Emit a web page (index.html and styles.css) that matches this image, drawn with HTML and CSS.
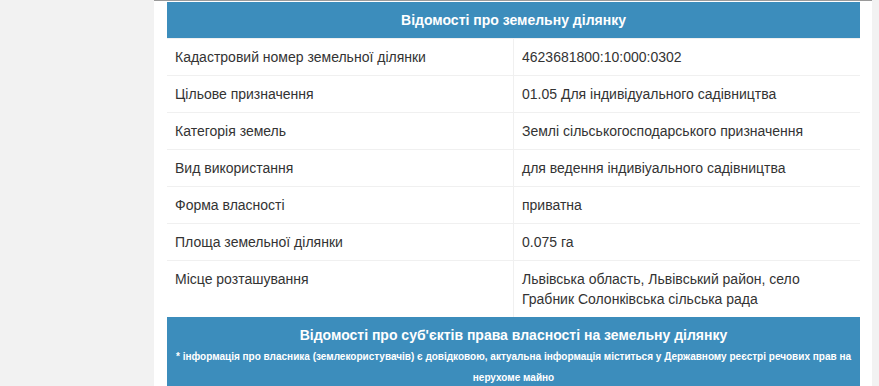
FILE: index.html
```html
<!DOCTYPE html>
<html lang="uk">
<head>
<meta charset="utf-8">
<link rel="stylesheet" href="styles.css">
</head>
<body>
<div class="page">
  <div class="panel">
    <table class="info">
      <thead>
        <tr><th colspan="2" class="head">Відомості про земельну ділянку</th></tr>
      </thead>
      <tbody>
        <tr><td class="label">Кадастровий номер земельної ділянки</td><td>4623681800:10:000:0302</td></tr>
        <tr><td class="label">Цільове призначення</td><td>01.05 Для індивідуального садівництва</td></tr>
        <tr><td class="label">Категорія земель</td><td>Землі сільськогосподарського призначення</td></tr>
        <tr><td class="label">Вид використання</td><td>для ведення індивіуального садівництва</td></tr>
        <tr><td class="label">Форма власності</td><td>приватна</td></tr>
        <tr><td class="label">Площа земельної ділянки</td><td>0.075 га</td></tr>
        <tr><td class="label">Місце розташування</td><td>Львівська область, Львівський район, село Грабник Солонківська сільська рада</td></tr>
        <tr><th colspan="2" class="head head2">Відомості про суб'єктів права власності на земельну ділянку<div class="note">* інформація про власника (землекористувачів) є довідковою, актуальна інформація міститься у Державному реєстрі речових прав на нерухоме майно</div></th></tr>
      </tbody>
    </table>
  </div>
</div>
</body>
</html>
```
FILE: styles.css
```css
html, body {
  margin: 0;
  padding: 0;
  background: #f2f2f2;
  font-family: "Liberation Sans", Arial, sans-serif;
  color: #333;
  font-size: 14px;
}
.page {
  display: flex;
  padding-left: 154px;
  height: 386px;
  overflow: hidden;
}
.panel {
  width: 718px;
  background: #fff;
  border-top: 1px solid #9a9a9a;
  padding: 1px 12px 0 13px;
  box-sizing: border-box;
}
.info {
  width: 693px;
  border-collapse: collapse;
  table-layout: fixed;
}
.info td {
  padding: 8px;
  line-height: 20px;
  border-top: 1px solid #f0f0f0;
  vertical-align: top;
}
.info td.label {
  width: 330px;
  border-right: 1px solid #f0f0f0;
}
.head {
  background: #3c8dbc;
  color: #fff;
  font-weight: bold;
  font-size: 14px;
  line-height: 20px;
  padding: 8px;
  text-align: center;
}
.head2 {
  padding: 8px 8px 0;
}
.note {
  font-size: 10px;
  line-height: 21px;
  margin-top: 1px;
}
```
